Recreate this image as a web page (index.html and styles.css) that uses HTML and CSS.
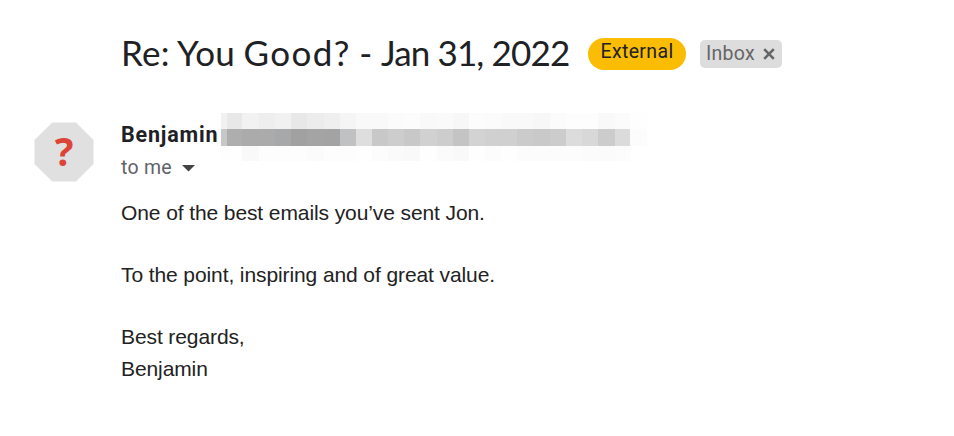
FILE: index.html
```html
<!DOCTYPE html>
<html lang="en">
<head>
<meta charset="utf-8">
<title>Re: You Good? - Jan 31, 2022</title>
<link rel="stylesheet" href="styles.css">
</head>
<body>
<main class="message">
  <header class="subject">
    <h1 class="title"><span class="topic">Re: You <span class="wide">Good?</span> - </span><span class="date">Jan 31, 2022</span></h1>
    <span class="external">External</span>
    <span class="label">Inbox
      <svg class="close" width="12" height="12" viewBox="0 0 12 12"><path d="M1.2 1.2 10.8 10.8M10.8 1.2 1.2 10.8"/></svg>
    </span>
  </header>
  <section class="mail">
    <div class="avatar">
      <svg width="60" height="60" viewBox="0 0 60 60"><path fill="#e0e0e0" d="M18.3 .5H42L59.5 18V42L42 59.5H18.3L.5 42V18Z"/></svg>
      <span class="question">?</span>
    </div>
    <div class="content">
      <div class="sender">
        <strong class="name">Benjamin</strong>
        <div class="redacted">
          <i class="g-f1"></i><i class="g-e8"></i><i class="g-f2"></i><i class="g-ee"></i><i class="g-f1"></i><i class="g-e8"></i><i class="g-ec"></i><i class="g-ef"></i><i class="g-f5"></i><i class="g-f9"></i><i class="g-f9"></i><i class="g-fb"></i><i class="g-fc"></i><i class="g-f9"></i><i class="g-fa"></i><i class="g-f7"></i><i class="g-fc"></i><i class="g-fb"></i><i class="g-f9"></i><i class="g-f9"></i><i class="g-f7"></i><i class="g-fb"></i><i class="g-fd"></i><i class="g-fd"></i><i class="g-f9"></i><i class="g-fb"></i><i class="g-fe"></i>
          <i class="g-c7"></i><i class="g-ae"></i><i class="g-ab"></i><i class="g-ab"></i><i class="g-a7"></i><i class="g-a1"></i><i class="g-a4"></i><i class="g-a3"></i><i class="g-c1"></i><i class="g-de"></i><i class="g-c8"></i><i class="g-cd"></i><i class="g-c8"></i><i class="g-d1"></i><i class="g-cd"></i><i class="g-c4"></i><i class="g-d3"></i><i class="g-d0"></i><i class="g-d0"></i><i class="g-cb"></i><i class="g-c9"></i><i class="g-cc"></i><i class="g-dc"></i><i class="g-d8"></i><i class="g-cc"></i><i class="g-db"></i><i class="g-fc"></i>
          <i class="g-fe"></i><i class="g-fe"></i><i class="g-f9"></i><i class="g-fd"></i><i class="g-fd"></i><i class="g-fd"></i><i class="g-fb"></i><i class="g-fd"></i><i class="g-fd"></i><i class="g-fe"></i><i class="g-fc"></i><i class="g-fa"></i><i class="g-f9"></i><i class="g-fe"></i><i class="g-fb"></i><i class="g-f9"></i><i class="g-fe"></i><i class="g-fc"></i><i class="g-fe"></i><i class="g-fc"></i><i class="g-fc"></i><i class="g-fc"></i><i class="g-fc"></i><i class="g-fb"></i><i class="g-fb"></i><i class="g-fc"></i><i class="g-ff"></i>
        </div>
      </div>
      <div class="recipient">to me <svg class="caret" width="13" height="7" viewBox="0 0 13 7"><path d="M0 0H13L6.5 6.5Z"/></svg></div>
      <div class="body">
        <p>One of the best emails you’ve sent Jon.</p>
        <p>To the point, inspiring and of great value.</p>
        <p>Best regards,<br>Benjamin</p>
      </div>
    </div>
  </section>
</main>
</body>
</html>
```
FILE: styles.css
```css
* { box-sizing: border-box; }
body { margin: 0; background: #fff; color: #202124; font-family: Roboto, "Liberation Sans", sans-serif; }
.message { padding: 30px 0 0 34px; }
.subject { display: flex; align-items: center; height: 48px; padding-left: 87px; }
.title { width: 467px; height: 48px; margin: 0; font: 400 35px/45px Lato, sans-serif; white-space: nowrap; }
.topic { letter-spacing: .3px; word-spacing: -.9px; }
.wide { letter-spacing: 1.4px; }
.date { letter-spacing: -.85px; }
.external { width: 98px; height: 32px; margin-right: 14px; border-radius: 16px; background: #fbbc04; text-align: center; font-size: 19.5px; line-height: 28px; letter-spacing: .35px; }
.label { display: flex; align-items: center; gap: 8px; width: 82px; height: 28px; padding-left: 6px; border-radius: 5px; background: #ddd; color: #666; font-size: 19.5px; line-height: 28px; letter-spacing: .25px; }
.close { fill: none; stroke: #666; stroke-width: 2.6; }
.mail { display: flex; gap: 27px; padding-top: 35px; }
.avatar { display: grid; width: 60px; height: 60px; margin-top: 9px; place-items: center; }
.avatar > * { grid-area: 1 / 1; }
.question { padding-bottom: 3px; color: #db4437; font: 700 39px/57px "Noto Sans", sans-serif; }
.sender { display: flex; height: 48px; }
.name { width: 100px; font-size: 21.5px; line-height: 43px; letter-spacing: .8px; }
.redacted { display: grid; grid-template-columns: 6px 15px 17px 16px 16px 16px 17px 16px 16px repeat(3, 16px) 16px 17px 16px 16px repeat(4, 16px) 17px 16px 16px 16px 17px 15px 17px; grid-template-rows: 16px 17px 15px; }
.recipient { display: flex; align-items: center; gap: 10px; height: 13px; color: #5f6368; font-size: 19.5px; letter-spacing: .25px; }
.caret { fill: #444; margin-top: 2px; }
.body { padding-top: 23px; color: #222; font: 21px/32px "Liberation Sans", sans-serif; letter-spacing: -.1px; }
.body p { margin: 0 0 30px; }
.g-a1 { background: #a1a1a1; }
.g-a3 { background: #a3a3a3; }
.g-a4 { background: #a4a4a4; }
.g-a7 { background: #a6a8aa; }
.g-ab { background: #ababab; }
.g-ae { background: #aeaeae; }
.g-c1 { background: #c0c1c3; }
.g-c4 { background: #c4c4c4; }
.g-c7 { background: #c7c7c7; }
.g-c8 { background: #c8c8c8; }
.g-c9 { background: #c9c9c9; }
.g-cb { background: #cbcbcb; }
.g-cc { background: #cccccc; }
.g-cd { background: #cdcdcd; }
.g-d0 { background: #d0d0d0; }
.g-d1 { background: #d1d1d1; }
.g-d3 { background: #d3d3d3; }
.g-d8 { background: #d8d8d8; }
.g-db { background: #dbdbdb; }
.g-dc { background: #dcdcdc; }
.g-de { background: #dedede; }
.g-e8 { background: #e8e8e8; }
.g-ec { background: #ececec; }
.g-ee { background: #eeeeee; }
.g-ef { background: #efefef; }
.g-f1 { background: #f1f1f1; }
.g-f2 { background: #f2f2f2; }
.g-f5 { background: #f5f5f5; }
.g-f7 { background: #f7f7f7; }
.g-f9 { background: #f9f9f9; }
.g-fa { background: #fafafa; }
.g-fb { background: #fbfbfb; }
.g-fc { background: #fcfcfc; }
.g-fd { background: #fdfdfd; }
.g-fe { background: #fefefe; }
.g-ff { background: #ffffff; }
```
